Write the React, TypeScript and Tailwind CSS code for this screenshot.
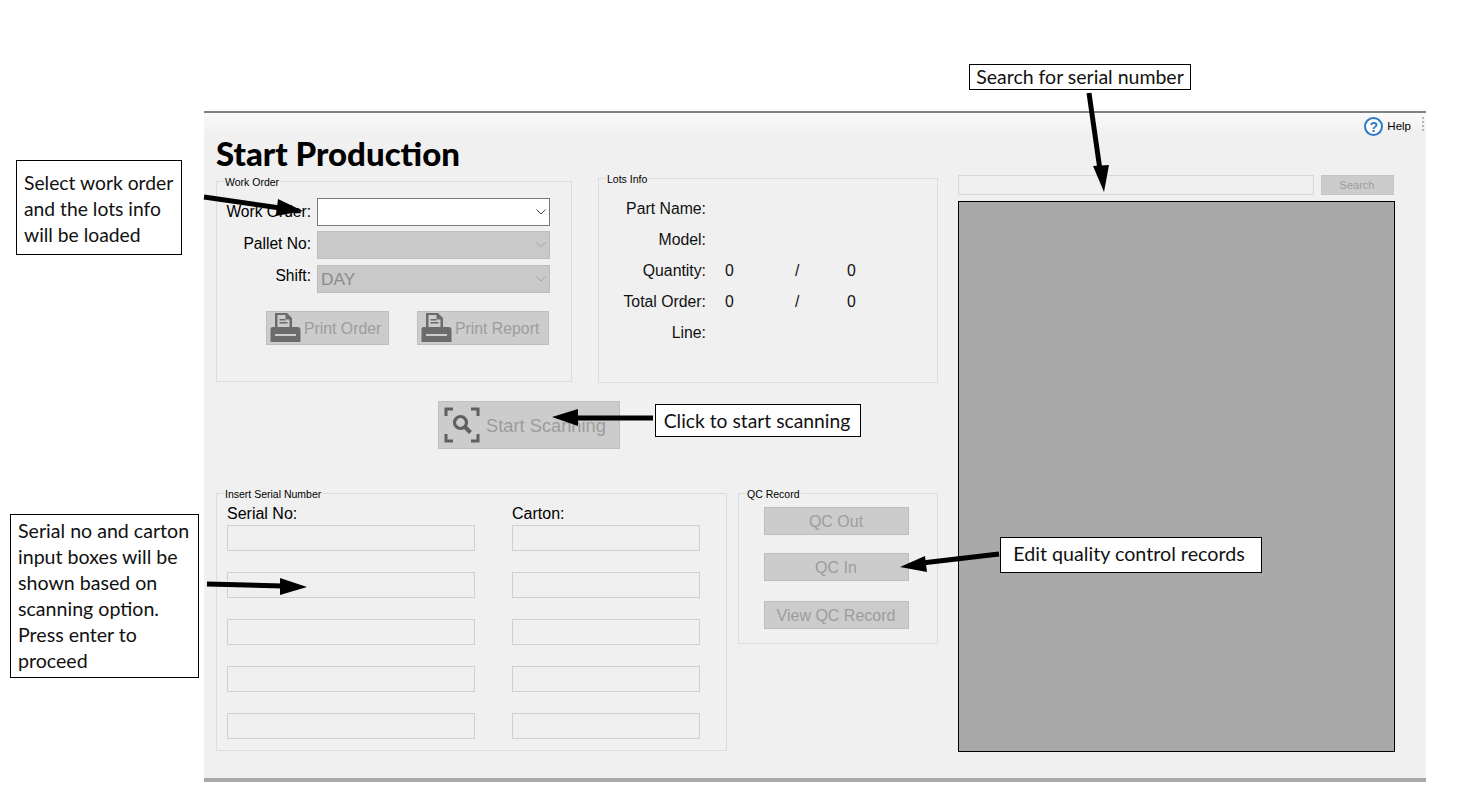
import type { ReactNode } from "react";

const arrows = [
  { tail: "204,197 280,208", head: "303,211 278,199 276,216" },
  { tail: "653,418 575,418", head: "552,417 578,409 578,426" },
  { tail: "207,584 283,586", head: "307,587 280,578 280,595" },
  { tail: "999,554 922,563", head: "900,567 925,556 927,572" },
  { tail: "1089,93 1100,170", head: "1104,192 1093,166 1109,165" },
];

function GroupBox({ title, className, children }: { title: string; className: string; children?: ReactNode }) {
  return (
    <div className={`border border-[#dcdcdc] ${className}`}>
      <div className="-mt-[6px] ml-[7px] h-[12px] w-fit bg-[#f0f0f0] px-px text-[10.5px] leading-[13px] text-black">{title}</div>
      {children}
    </div>
  );
}

function Chevron({ color }: { color: string }) {
  return (
    <svg width="10" height="6" viewBox="0 0 10 6" fill="none" stroke={color} strokeWidth="1">
      <path d="M0.5 0.5 L5 5 L9.5 0.5" />
    </svg>
  );
}

function Combo({ value, disabled }: { value?: string; disabled?: boolean }) {
  return (
    <div
      className={`flex h-[28px] w-[233px] items-center justify-between border pl-[3px] pr-[3px] text-[17.3px] ${
        disabled ? "border-[#bcbcbc] bg-[#c9c9c9] text-[#8c8c8c]" : "border-[#7a7a7a] bg-white"
      }`}
    >
      <span className="pt-px">{value}</span>
      <Chevron color={disabled ? "#a6a6a6" : "#444444"} />
    </div>
  );
}

function PrinterIcon() {
  return (
    <svg width="31" height="30" viewBox="0 0 31 30" fill="#6b6b6b">
      <path d="M5 0 H17 L22 5 V16 H5 Z M7.5 2 V14 H19.5 V6.5 H15.5 V2 Z" fillRule="evenodd" />
      <rect x="9.5" y="6" width="6" height="1.5" />
      <rect x="9.5" y="9" width="8" height="1.5" />
      <path d="M2.5 14 H5 V16 H22 V14 H27.5 Q30.5 14 30.5 17 V29 H0.5 V17 Q0.5 14 2.5 14 Z M5 21 V23 H26 V21 Z" fillRule="evenodd" />
    </svg>
  );
}

function PrintButton({ label, className }: { label: string; className: string }) {
  return (
    <div className={`flex h-[34px] items-center gap-[3px] border border-[#bdbdbd] bg-[#cccccc] pl-[3px] text-[15.8px] text-[#9c9c9c] ${className}`}>
      <PrinterIcon />
      <span className="pt-px">{label}</span>
    </div>
  );
}

function ScanIcon() {
  return (
    <svg width="36" height="36" viewBox="0 0 36 36" fill="none" stroke="#5f5f5f">
      <path d="M2 9 V2 H9 M27 2 H34 V9 M2 27 V34 H9 M27 34 H34 V27" strokeWidth="3" />
      <circle cx="16.5" cy="15.5" r="6" strokeWidth="3.2" />
      <path d="M21 20 L26.5 25.5" strokeWidth="4" />
    </svg>
  );
}

function Field({ className }: { className: string }) {
  return <div className={`h-[26px] border border-[#d0d0d0] bg-[#efefef] ${className}`} />;
}

function QcButton({ label, className }: { label: string; className?: string }) {
  return (
    <div className={`ml-[25px] flex h-[28px] w-[145px] items-center justify-center border border-[#bdbdbd] bg-[#cccccc] pr-px pt-[2px] text-[16px] text-[#9c9c9c] ${className ?? ""}`}>
      {label}
    </div>
  );
}

function LotRow({ label, values }: { label: string; values?: boolean }) {
  return (
    <div className="flex h-[31px] items-center text-[15.8px] text-[#111111]">
      <span className="w-[107px] text-right">{label}</span>
      {values && (
        <>
          <span className="ml-[19px] w-[70px]">0</span>
          <span className="w-[52px]">/</span>
          <span>0</span>
        </>
      )}
    </div>
  );
}

function Note({ className, children }: { className: string; children: ReactNode }) {
  return (
    <div className={`absolute border border-black bg-white font-['Lato',sans-serif] leading-[26px] text-[#111111] ${className}`}>
      {children}
    </div>
  );
}

export default function App() {
  return (
    <div className="relative h-[810px] overflow-hidden bg-white pl-[204px] pt-[111px] font-['Liberation_Sans',Arial,sans-serif]">
      <div className="flex h-[671px] w-[1222px] border-b-4 border-t-2 border-b-[#a8a8a8] border-t-[#808080] bg-[#f0f0f0] bg-gradient-to-b from-[#fafafa] to-[#f0f0f0] to-[20px]">
        <div className="ml-[12px] w-[722px] pt-[22px]">
          <h1 className="h-[43px] font-['Lato',sans-serif] text-[33px] font-black leading-[36px] text-black">Start Production</h1>

          <div className="flex items-start gap-[26px]">
            <GroupBox title="Work Order" className="mt-[3px] h-[201px] w-[356px]">
              <div className="mt-[10px] flex flex-col">
                <div className="flex gap-[6px]">
                  <span className="w-[94px] pt-[2px] text-right text-[15.6px]">Work Order:</span>
                  <Combo />
                </div>
                <div className="mt-[5px] flex gap-[6px]">
                  <span className="w-[94px] pt-px text-right text-[15.6px]">Pallet No:</span>
                  <Combo disabled />
                </div>
                <div className="mt-[6px] flex gap-[6px]">
                  <span className="-mt-px w-[94px] text-right text-[15.6px]">Shift:</span>
                  <Combo value="DAY" disabled />
                </div>
              </div>
              <div className="mt-[18px] flex gap-[28px] pl-[49px]">
                <PrintButton label="Print Order" className="w-[123px]" />
                <PrintButton label="Print Report" className="w-[132px]" />
              </div>
            </GroupBox>

            <GroupBox title="Lots Info" className="h-[205px] w-[340px]">
              <div className="mt-[8px]">
                <LotRow label="Part Name:" />
                <LotRow label="Model:" />
                <LotRow label="Quantity:" values />
                <LotRow label="Total Order:" values />
                <LotRow label="Line:" />
              </div>
            </GroupBox>
          </div>

          <div className="ml-[222px] mt-[18px] flex h-[48px] w-[182px] items-center gap-[6px] border border-[#c0c0c0] bg-[#cccccc] pl-[5px] text-[18.3px] text-[#9c9c9c]">
            <ScanIcon />
            <span className="pt-px">Start Scanning</span>
          </div>

          <div className="mt-[44px] flex items-start gap-[11px]">
            <GroupBox title="Insert Serial Number" className="h-[258px] w-[511px]">
              <div className="flex gap-[37px] pl-[10px]">
                <div className="flex flex-col gap-[21px]">
                  <div className="-mb-[19px] mt-[4px] h-[19px] text-[16px] leading-[20px]">Serial No:</div>
                  <Field className="w-[248px]" />
                  <Field className="w-[248px]" />
                  <Field className="w-[248px]" />
                  <Field className="w-[248px]" />
                  <Field className="w-[248px]" />
                </div>
                <div className="flex flex-col gap-[21px]">
                  <div className="-mb-[19px] mt-[4px] h-[19px] text-[16px] leading-[20px]">Carton:</div>
                  <Field className="w-[188px]" />
                  <Field className="w-[188px]" />
                  <Field className="w-[188px]" />
                  <Field className="w-[188px]" />
                  <Field className="w-[188px]" />
                </div>
              </div>
            </GroupBox>

            <GroupBox title="QC Record" className="h-[151px] w-[200px]">
              <QcButton label="QC Out" className="mt-[7px]" />
              <QcButton label="QC In" className="mt-[18px]" />
              <QcButton label="View QC Record" className="mt-[20px]" />
            </GroupBox>
          </div>
        </div>

        <div className="ml-[20px] flex w-[468px] flex-col pr-[31px]">
          <div className="relative flex h-[62px] items-start justify-end pt-[4px]">
            <div className="-mr-[16px] flex items-center gap-[4px]">
              <div className="flex h-[19px] w-[19px] items-center justify-center rounded-full border-2 border-[#2a78c8] bg-white text-[14px] font-bold leading-none text-[#2a78c8]">?</div>
              <span className="text-[11.5px] text-black">Help</span>
            </div>
            <div className="absolute -right-[29px] top-[4px] h-[14px] border-l-2 border-dotted border-[#b5b5b5]" />
          </div>
          <div className="flex h-[20px] gap-[7px]">
            <div className="w-[356px] border border-[#d8d8d8] bg-[#efefef]" />
            <div className="flex w-[73px] items-center justify-center border border-[#c4c4c4] bg-[#cccccc] pr-px text-[11px] text-[#9c9c9c]">Search</div>
          </div>
          <div className="mt-[6px] h-[551px] border border-black bg-[#a9a9a9]" />
        </div>
      </div>

      <svg className="pointer-events-none absolute inset-0" width="1469" height="810" viewBox="0 0 1469 810" fill="#000000" stroke="none">
        {arrows.map((a) => (
          <g key={a.head}>
            <polyline points={a.tail} fill="none" stroke="#000000" strokeWidth="5" />
            <polygon points={a.head} />
          </g>
        ))}
      </svg>

      <Note className="left-[969px] top-[64px] flex h-[26px] w-[222px] items-center justify-center text-[19.5px]">Search for serial number</Note>
      <Note className="left-[16px] top-[160px] h-[95px] w-[166px] pl-[7px] pt-[9px] text-[19.3px]">
        Select work order<br />and the lots info<br />will be loaded
      </Note>
      <Note className="left-[655px] top-[404px] flex h-[33px] w-[206px] items-center justify-center pr-[2px] text-[19.3px]">Click to start scanning</Note>
      <Note className="left-[10px] top-[514px] h-[164px] w-[189px] pl-[7px] pt-[3px] text-[19.6px]">
        Serial no and carton<br />input boxes will be<br />shown based on<br />scanning option.<br />Press enter to<br />proceed
      </Note>
      <Note className="left-[1000px] top-[537px] flex h-[36px] w-[262px] items-center justify-center pb-[2px] pr-[4px] text-[19.7px]">Edit quality control records</Note>
    </div>
  );
}
